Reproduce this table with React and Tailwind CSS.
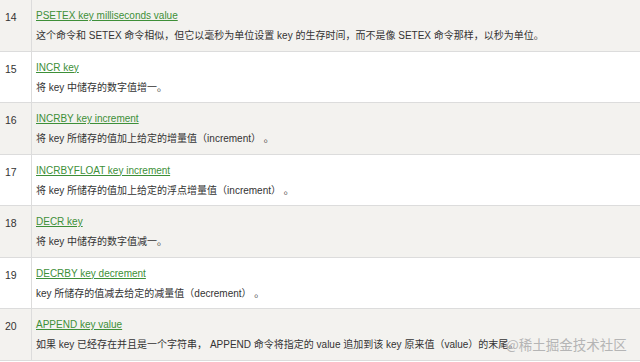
import React from 'react'

// Redis string command reference rows
const rows = [
  { n: 14, cmd: 'PSETEX key milliseconds value', desc: '这个命令和 SETEX 命令相似，但它以毫秒为单位设置 key 的生存时间，而不是像 SETEX 命令那样，以秒为单位。' },
  { n: 15, cmd: 'INCR key', desc: '将 key 中储存的数字值增一。' },
  { n: 16, cmd: 'INCRBY key increment', desc: '将 key 所储存的值加上给定的增量值（increment） 。' },
  { n: 17, cmd: 'INCRBYFLOAT key increment', desc: '将 key 所储存的值加上给定的浮点增量值（increment） 。' },
  { n: 18, cmd: 'DECR key', desc: '将 key 中储存的数字值减一。' },
  { n: 19, cmd: 'DECRBY key decrement', desc: 'key 所储存的值减去给定的减量值（decrement） 。' },
  { n: 20, cmd: 'APPEND key value', desc: '如果 key 已经存在并且是一个字符串， APPEND 命令将指定的 value 追加到该 key 原来值（value）的末尾。' },
]

export default function App() {
  return (
    <div className="relative w-[640px] h-[362px] overflow-hidden bg-white text-[10px] text-[#333] font-['Liberation_Sans','Noto_Sans_CJK_SC',sans-serif]">
      <div className="flex flex-col">
        {rows.map((r, i) => (
          <div key={r.n} className={`flex h-[51.5px] border-b border-[#dcdcdc] ${i % 2 === 0 ? 'bg-[#f3f2ef]' : 'bg-white'}`}>
            <div className="w-[32px] shrink-0 border-r border-[#dcdcdc] pl-[5px] pt-[10px] text-[10.5px]">{r.n}</div>
            <div className="pl-[4px] pt-[10px] whitespace-nowrap">
              <div className="leading-[12px] text-[#3d8f38] underline underline-offset-[1px]">{r.cmd}</div>
              <div className="mt-[8px] leading-[12px]">{r.desc}</div>
            </div>
          </div>
        ))}
      </div>
      <div className="absolute left-[506px] top-[335px] text-[13.5px] leading-[18px] text-[#b5b5b5] font-['Noto_Sans_CJK_SC',sans-serif]">@稀土掘金技术社区</div>
    </div>
  )
}
